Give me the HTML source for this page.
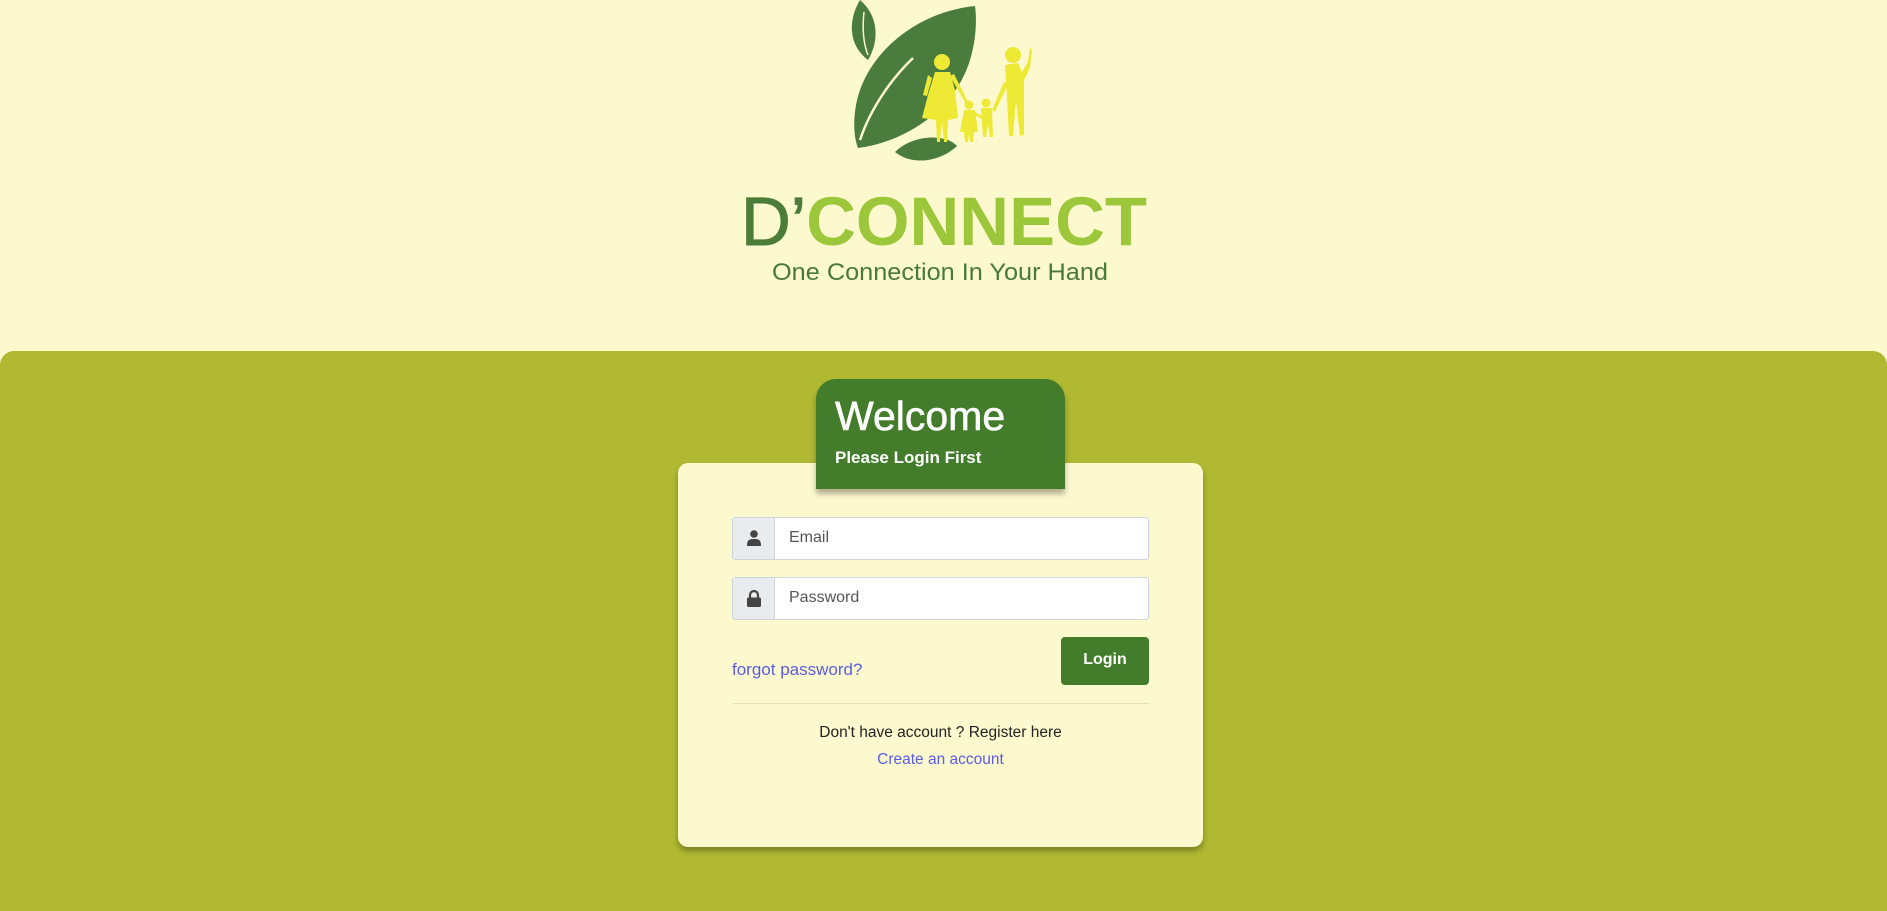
<!DOCTYPE html>
<html><head><meta charset="utf-8"><style>
*{box-sizing:border-box;margin:0;padding:0}
body{width:1887px;height:892px;background:#fdf9cf;font-family:"Liberation Sans",sans-serif;position:relative;overflow:hidden}
.green{position:absolute;left:0;top:351px;width:1887px;height:560px;background:#b0b931;border-radius:14px 14px 0 0}
.card{position:absolute;left:678px;top:463px;width:525px;height:384px;background:#fdf9cf;border-radius:10px;box-shadow:0 4px 6px rgba(0,0,0,.3)}
.tab{position:absolute;left:816px;top:379px;width:249px;height:110px;background:#437c2a;border-radius:20px 20px 0 0;box-shadow:0 5px 6px rgba(0,0,0,.3);color:#fff}
.tab h1{position:absolute;left:19px;top:14px;font-size:41px;font-weight:normal;-webkit-text-stroke:0.6px #fff}
.tab p{position:absolute;left:19px;top:69px;font-size:17px;font-weight:bold}
.inp{position:absolute;left:732px;width:417px;height:43px;border:1px solid #cfd4da;border-radius:3px;background:#fff}
.inp .ad{position:absolute;left:0;top:0;width:42px;height:41px;background:#e9ecef;border-right:1px solid #cfd4da}
.inp span{position:absolute;left:56px;top:11px;font-size:16px;color:#555}
.ad svg{position:absolute;left:14px;top:12px}
.btn{position:absolute;left:1061px;top:637px;width:88px;height:48px;background:#437c2a;border-radius:4px;color:#fff;font-weight:bold;font-size:16px;text-align:center;line-height:46px}
.fp{position:absolute;left:732px;top:660px;font-size:17px;color:#5a5de0}
.hr{position:absolute;left:732px;top:703px;width:417px;height:1px;background:#e3dfbf}
.c{position:absolute;left:678px;width:525px;text-align:center}
</style></head><body>
<svg style="position:absolute;left:0;top:0" width="1887" height="300">
<path d="M860 0 C848 20 848 45 868 60 C880 40 878 15 860 0Z" fill="#4a7c3e"/>
<path d="M864 12 C862 30 864 45 868 55" stroke="#fdf9cf" stroke-width="1.5" fill="none"/>
<path d="M975 6 C915 12 865 55 856 105 C853 122 854 138 858 148 C905 142 955 110 970 60 C976 40 977 20 975 6Z" fill="#4a7c3e"/>
<path d="M913 58 C890 80 870 110 860 140" stroke="#fdf9cf" stroke-width="2.5" fill="none"/>
<path d="M895 152 C912 135 945 133 957 146 C940 162 912 166 895 152Z" fill="#4a7c3e"/>
<g fill="#ede934">
<circle cx="942" cy="62" r="8"/>
<path d="M935 72 L950 72 L955 90 L958 118 L948 120 L947 142 L944 142 L942 122 L940 142 L937 142 L936 120 L922 118 L928 95 Z"/>
<path d="M928 75 L923 95 L927 96 L932 78Z"/>
<path d="M950 76 L966 104 L968 102 L954 74Z"/>
<circle cx="969" cy="105" r="4.5"/>
<path d="M964 110 L975 110 L978 132 L974 132 L973 142 L970 142 L969 133 L968 142 L965 142 L964 132 L960 132Z"/>
<path d="M975 112 L985 118 L984 120 L974 115Z"/>
<circle cx="986" cy="103" r="4.5"/>
<path d="M981 108 L992 108 L993 137 L990 137 L988 124 L986 137 L983 137Z"/>
<path d="M992 110 L1004 82 L1008 84 L995 112Z"/>
<circle cx="1013" cy="55" r="8"/>
<path d="M1005 65 L1018 63 L1022 72 L1028 62 L1030 48 L1032 50 L1030 68 L1024 80 L1024 135 L1020 136 L1016 100 L1013 136 L1009 136 L1006 80Z"/>
</g>
<text x="741" y="245" font-family="Liberation Sans,sans-serif" font-size="69" textLength="406" lengthAdjust="spacingAndGlyphs"><tspan fill="#4b7c3a" stroke="#4b7c3a" stroke-width="1">D’</tspan><tspan fill="#9dc73b" font-weight="bold">CONNECT</tspan></text>
<text x="772" y="280" font-family="Liberation Sans,sans-serif" font-size="24" fill="#4a7a3a" textLength="336" lengthAdjust="spacingAndGlyphs">One Connection In Your Hand</text>
</svg>
<div class="green"></div>
<div class="card"></div>
<div class="tab"><h1>Welcome</h1><p>Please Login First</p></div>
<div class="inp" style="top:517px"><div class="ad"><svg width="14" height="16" viewBox="0 0 14 16"><circle cx="7" cy="4" r="3.8" fill="#444"/><path d="M0 16 C0 10 2 9 7 9 C12 9 14 10 14 16Z" fill="#444"/></svg></div><span>Email</span></div>
<div class="inp" style="top:577px"><div class="ad"><svg width="14" height="17" viewBox="0 0 14 17"><path d="M3 8 V5 a4 4 0 0 1 8 0 V8" stroke="#444" stroke-width="2.2" fill="none"/><rect x="0" y="7.5" width="14" height="9.5" rx="1.5" fill="#444"/></svg></div><span>Password</span></div>
<div class="btn">Login</div>
<div class="fp">forgot password?</div>
<div class="hr"></div>
<div class="c" style="top:724px;font-size:15.5px;color:#222">Don't have account ? Register here</div>
<div class="c" style="top:751px;font-size:15.5px;color:#5a5de0">Create an account</div>
</body></html>
